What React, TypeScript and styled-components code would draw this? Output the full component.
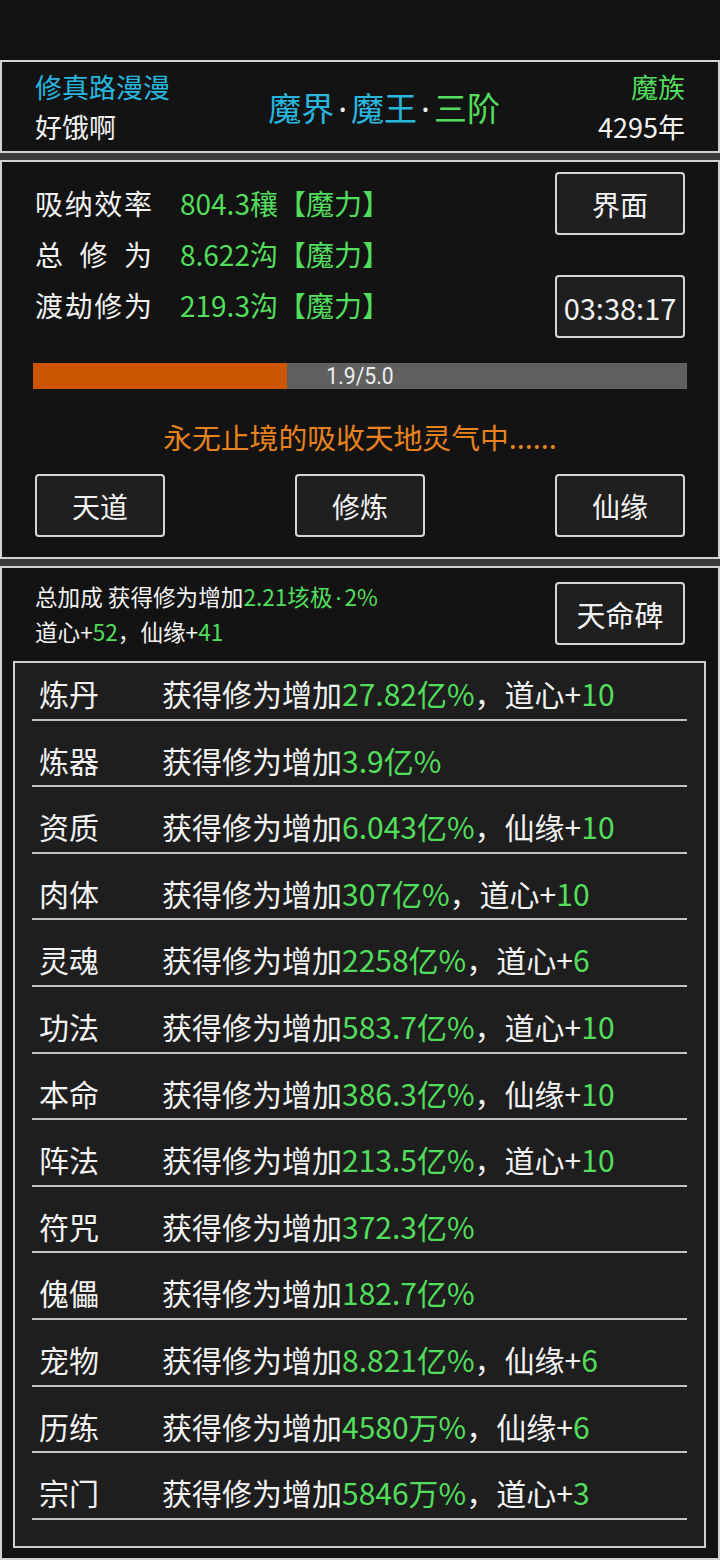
import React from "react";
import styled, { createGlobalStyle } from "styled-components";

const GlobalStyle = createGlobalStyle`
  html, body { margin: 0; padding: 0; background: #121212; }
  body { font-family: "Noto Sans CJK SC", "Noto Sans", sans-serif; color: #f0f0f0; }
  * { box-sizing: border-box; }
`;

const GREEN = "#52de5c";
const CYAN = "#28b6de";
const WHITE = "#f2f2f2";

const Page = styled.div`
  width: 720px;
  height: 1560px;
  background: #121212;
  display: flex;
  flex-direction: column;
`;

const StatusBar = styled.div`
  height: 60px;
  background: #121212;
  flex-shrink: 0;
`;

const Stack = styled.div`
  display: flex;
  flex-direction: column;
  gap: 7px;
  background: #3c3c3c;
`;

const Panel = styled.section<{ $h: number }>`
  height: ${(p) => p.$h}px;
  border: 2px solid #d2d2d2;
  background: #131313;
`;

const Header = styled(Panel)`
  display: flex;
  align-items: center;
  padding: 0 33px;
`;

const HeaderCol = styled.div<{ $align: string }>`
  display: flex;
  flex-direction: column;
  align-items: ${(p) => p.$align};
  font-size: 27px;
  line-height: 40px;
`;

const Title = styled.div`
  flex: 1;
  text-align: center;
  font-size: 33px;
  line-height: 44px;
  padding-top: 2px;
`;

const Dot = styled.span`
  color: ${WHITE};
  font-family: "Noto Sans", sans-serif;
  margin: 0 4px;
`;

const SmallDot = styled.span`
  font-family: "Noto Sans", sans-serif;
  margin: 0 3px;
`;

const C = styled.span<{ $c: string }>`
  color: ${(p) => p.$c};
`;

const Main = styled(Panel)`
  display: flex;
  flex-direction: column;
  padding: 0 31px 19px;
`;

const TopRow = styled.div`
  display: flex;
  justify-content: space-between;
  padding: 10px 2px 0 2px;
`;

const Stats = styled.div`
  display: flex;
  flex-direction: column;
  padding-top: 6px;
`;

const StatRow = styled.div`
  display: flex;
  font-size: 28px;
  line-height: 51px;
  height: 51px;
`;

const StatLabel = styled.span`
  width: 117px;
  text-align: justify;
  text-align-last: justify;
  color: ${WHITE};
  margin-right: 28px;
  white-space: pre;
`;

const StatValue = styled.span`
  color: ${GREEN};
`;

const SideCol = styled.div`
  display: flex;
  flex-direction: column;
  gap: 40px;
`;

const Button = styled.div<{ $size?: number }>`
  width: 130px;
  height: 63px;
  border: 2px solid #d6d6d6;
  border-radius: 4px;
  background: #1f1f1f;
  display: flex;
  align-items: center;
  justify-content: center;
  font-size: ${(p) => p.$size ?? 28}px;
  color: ${WHITE};
`;

const Bar = styled.div`
  position: relative;
  margin-top: 25px;
  height: 26px;
  background: #606060;
`;

const BarFill = styled.div`
  height: 100%;
  background: #cc5500;
`;

const BarText = styled.div`
  position: absolute;
  inset: 0;
  display: flex;
  align-items: center;
  justify-content: center;
  font-family: "Roboto", "Noto Sans", sans-serif;
  font-size: 24px;
  color: #eeeeee;
  transform: scaleX(0.88);
`;

const Message = styled.div`
  margin-top: 28px;
  text-align: center;
  font-size: 28.8px;
  line-height: 40px;
  color: #e8821c;
`;

const ButtonRow = styled.div`
  margin-top: 17px;
  display: flex;
  justify-content: space-between;
  padding: 0 2px;
`;

const Bonus = styled(Panel)`
  display: flex;
  flex-direction: column;
  padding: 12px 12px 10px 11px;
`;

const SummaryRow = styled.div`
  display: flex;
  justify-content: space-between;
  padding: 0 21px 0 22px;
`;

const SummaryText = styled.div`
  font-size: 22.6px;
  line-height: 34px;
  color: ${WHITE};
`;

const SummaryButton = styled(Button)`
  margin-top: 2px;
`;

const List = styled.div`
  margin-top: 12px;
  flex: 1;
  border: 2px solid #cfcfcf;
  background: #1e1e1e;
  padding: 0 17px 25px;
  display: flex;
  flex-direction: column;
`;

const Row = styled.div<{ $first?: boolean }>`
  display: flex;
  padding: ${(p) => (p.$first ? "13px" : "22px")} 0 8.6px 7px;
  border-bottom: 2px solid #c4c4c4;
  font-size: 30px;
  line-height: 34px;
  color: ${WHITE};
  white-space: nowrap;
`;

const RowLabel = styled.span`
  width: 123px;
  flex-shrink: 0;
`;

type Item = { name: string; value: string; extra?: [string, string] };

const items: Item[] = [
  { name: "炼丹", value: "27.82亿%", extra: ["道心+", "10"] },
  { name: "炼器", value: "3.9亿%" },
  { name: "资质", value: "6.043亿%", extra: ["仙缘+", "10"] },
  { name: "肉体", value: "307亿%", extra: ["道心+", "10"] },
  { name: "灵魂", value: "2258亿%", extra: ["道心+", "6"] },
  { name: "功法", value: "583.7亿%", extra: ["道心+", "10"] },
  { name: "本命", value: "386.3亿%", extra: ["仙缘+", "10"] },
  { name: "阵法", value: "213.5亿%", extra: ["道心+", "10"] },
  { name: "符咒", value: "372.3亿%" },
  { name: "傀儡", value: "182.7亿%" },
  { name: "宠物", value: "8.821亿%", extra: ["仙缘+", "6"] },
  { name: "历练", value: "4580万%", extra: ["仙缘+", "6"] },
  { name: "宗门", value: "5846万%", extra: ["道心+", "3"] },
];

const stats = [
  { label: "吸纳效率", value: "804.3穰【魔力】" },
  { label: "总 修 为", value: "8.622沟【魔力】" },
  { label: "渡劫修为", value: "219.3沟【魔力】" },
];

export default function App() {
  const progress = (1.9 / 5.0) * 100 + 0.9;
  return (
    <Page>
      <GlobalStyle />
      <StatusBar />
      <Stack>
        <Header $h={93}>
          <HeaderCol $align="flex-start">
            <C $c={CYAN}>修真路漫漫</C>
            <C $c={WHITE}>好饿啊</C>
          </HeaderCol>
          <Title>
            <C $c={CYAN}>魔界</C>
            <Dot>·</Dot>
            <C $c={CYAN}>魔王</C>
            <Dot>·</Dot>
            <C $c={GREEN}>三阶</C>
          </Title>
          <HeaderCol $align="flex-end">
            <C $c={GREEN}>魔族</C>
            <C $c={WHITE}>4295年</C>
          </HeaderCol>
        </Header>

        <Main $h={399}>
          <TopRow>
            <Stats>
              {stats.map((s) => (
                <StatRow key={s.label}>
                  <StatLabel>{s.label}</StatLabel>
                  <StatValue>{s.value}</StatValue>
                </StatRow>
              ))}
            </Stats>
            <SideCol>
              <Button>界面</Button>
              <Button $size={29}>03:38:17</Button>
            </SideCol>
          </TopRow>
          <Bar>
            <BarFill style={{ width: `${progress}%` }} />
            <BarText>1.9/5.0</BarText>
          </Bar>
          <Message>永无止境的吸收天地灵气中......</Message>
          <ButtonRow>
            <Button>天道</Button>
            <Button>修炼</Button>
            <Button>仙缘</Button>
          </ButtonRow>
        </Main>

        <Bonus $h={994}>
          <SummaryRow>
            <SummaryText>
              <div>
                总加成 获得修为增加
                <C $c={GREEN}>
                  2.21垓极<SmallDot>·</SmallDot>2%
                </C>
              </div>
              <div>
                道心+<C $c={GREEN}>52</C>，仙缘+<C $c={GREEN}>41</C>
              </div>
            </SummaryText>
            <SummaryButton $size={29}>天命碑</SummaryButton>
          </SummaryRow>
          <List>
            {items.map((it, i) => (
              <Row key={it.name} $first={i === 0}>
                <RowLabel>{it.name}</RowLabel>
                <span>
                  获得修为增加<C $c={GREEN}>{it.value}</C>
                  {it.extra && (
                    <>
                      ，{it.extra[0]}
                      <C $c={GREEN}>{it.extra[1]}</C>
                    </>
                  )}
                </span>
              </Row>
            ))}
          </List>
        </Bonus>
      </Stack>
    </Page>
  );
}
